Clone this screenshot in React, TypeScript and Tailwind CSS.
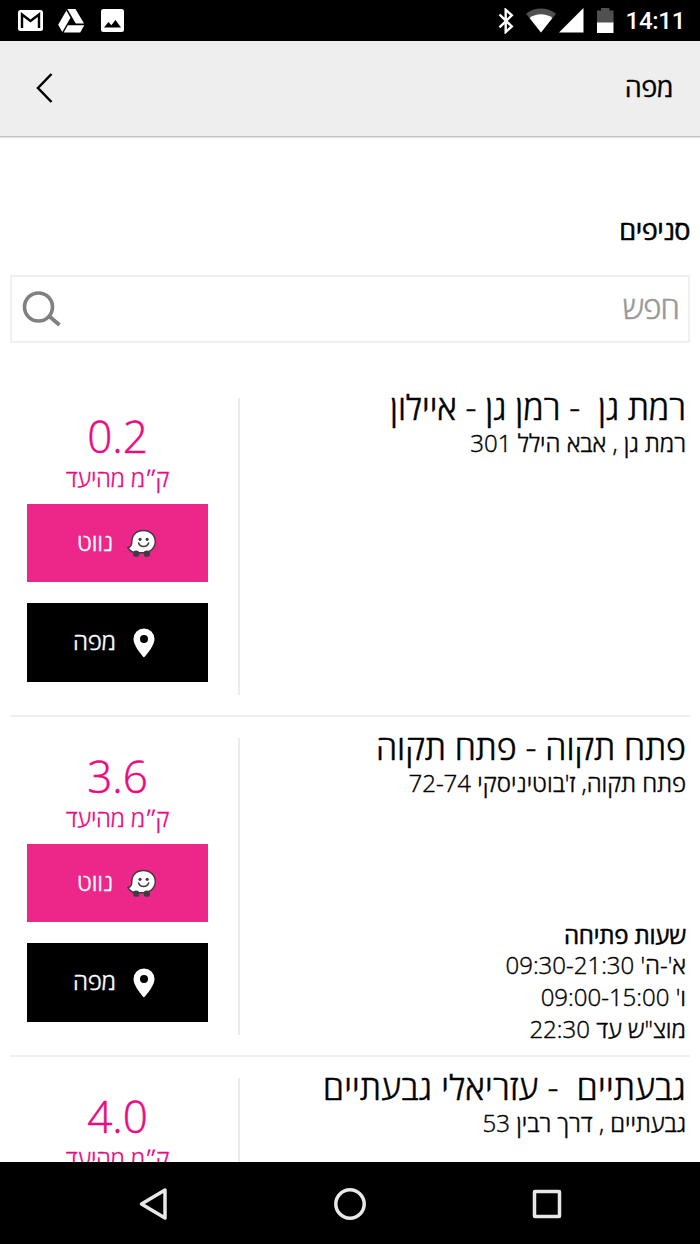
import type { ReactNode } from "react";

type Branch = {
  name: string;
  nameClass: string;
  address: string;
  distance: string;
  hours?: string[];
};

const branches: Branch[] = [
  {
    name: "רמת גן\u00a0 - רמן גן - איילון",
    nameClass: "tracking-normal",
    address: "רמת גן , אבא הילל 301",
    distance: "0.2",
  },
  {
    name: "פתח תקוה - פתח תקוה",
    nameClass: "tracking-normal",
    address: "פתח תקוה, ז'בוטיניסקי 72-74",
    distance: "3.6",
    hours: ["א'-ה' 09:30-21:30", "ו' 09:00-15:00", "מוצ\"ש עד 22:30"],
  },
  {
    name: "גבעתיים\u00a0 - עזריאלי גבעתיים",
    nameClass: "tracking-[0.27px]",
    address: "גבעתיים , דרך רבין 53",
    distance: "4.0",
  },
];

function StatusBar() {
  return (
    <div className="flex h-[41px] shrink-0 items-center justify-between bg-black pr-[15px] pl-[18px]">
      <div className="flex items-center">
        <svg width="25" height="21" viewBox="0 0 25 21">
          <rect width="25" height="21" rx="2.5" fill="#fff" />
          <path d="M4 18V4.5L12.5 11L21 4.5V18" fill="none" stroke="#000" strokeWidth="2.4" />
        </svg>
        <svg className="ml-[15px]" width="27" height="24" viewBox="0 0 27 24">
          <path d="M9.3 0H17.5L26 14.6H17.8Z" fill="#fff" />
          <path d="M8.4 1.6L12.5 8.7L4.3 23L0.2 15.8Z" fill="#fff" />
          <path d="M9.8 16.3H26.3L22.2 23.5H5.7Z" fill="#fff" />
        </svg>
        <svg className="ml-[16px]" width="23" height="23" viewBox="0 0 23 23">
          <rect width="23" height="23" rx="2.5" fill="#fff" />
          <path d="M3 18.5L7.5 13L10.3 16.2L14.5 11L20 18.5Z" fill="#000" />
        </svg>
      </div>
      <div className="flex items-center">
        <svg width="17" height="26" viewBox="0 0 17 26">
          <path d="M1.5 6.5L13.8 18.5L7.7 24V1.8L13.8 7.3L1.5 19.3" fill="none" stroke="#fff" strokeWidth="2.4" />
        </svg>
        <svg className="ml-[11px]" width="30" height="25" viewBox="0 0 30 25">
          <path d="M0 5.8C8.5-1.4 21.5-1.4 30 5.8L15 24.5Z" fill="#505050" />
          <path d="M3.6 10C10 5.1 20 5.1 26.4 10L15 24.5Z" fill="#fff" />
        </svg>
        <svg className="ml-[3px]" width="25" height="25" viewBox="0 0 25 25">
          <path d="M0 24.5L24.5 0V24.5Z" fill="#fff" />
        </svg>
        <svg className="ml-[13px]" width="17" height="25" viewBox="0 0 17 25">
          <path d="M0 2.5H4V0H12.5V2.5H16.5V15H0Z" fill="#505050" />
          <path d="M0 14.5H16.5V25H0Z" fill="#fff" />
        </svg>
        <span className="ml-[12px] pt-[2px] font-[Roboto] text-[24px] leading-[39px] font-medium tracking-[-0.3px] text-white">
          14:11
        </span>
      </div>
    </div>
  );
}

function Header() {
  return (
    <header className="flex h-[96px] shrink-0 items-center justify-between border-b border-[#c4c4c4] bg-[#eeeeee] pr-[27px] pb-[1px] pl-[36px] shadow-[0_1px_1px_#e0e0e0]">
      <svg width="18" height="32" viewBox="0 0 18 32">
        <path d="M15.5 2L2 16L15.5 30" fill="none" stroke="#000" strokeWidth="2.5" />
      </svg>
      <h1 dir="rtl" className="pb-[2px] text-[27px] leading-[40px] tracking-[-0.5px] [-webkit-text-stroke:0.3px]">
        מפה
      </h1>
    </header>
  );
}

function WazeIcon() {
  return (
    <svg width="30" height="29" viewBox="0 0 31 29">
      <path
        d="M5 12.5C5 5.5 10 1 17 1C24 1 29.2 6 29.2 12.5C29.2 19 24 24 17 24H10C6 24 2.5 21.5 1 18.7C4 18.5 5 16.5 5 12.5Z"
        fill="#fff"
        stroke="#403c40"
        strokeWidth="1.5"
      />
      <circle cx="9.5" cy="25" r="3.3" fill="#403c40" />
      <circle cx="20.5" cy="25" r="3.3" fill="#403c40" />
      <circle cx="13.5" cy="10.2" r="1.6" fill="#403c40" />
      <circle cx="20.8" cy="10.2" r="1.6" fill="#403c40" />
      <path d="M12 14C13.5 18.8 20.8 18.8 22.3 14" fill="none" stroke="#403c40" strokeWidth="1.6" strokeLinecap="round" />
    </svg>
  );
}

function PinIcon() {
  return (
    <svg width="22" height="30" viewBox="0 0 22 30">
      <path
        fillRule="evenodd"
        d="M11 .5A10.5 10.5 0 0 0 .5 11C.5 18.5 11 29.5 11 29.5S21.5 18.5 21.5 11A10.5 10.5 0 0 0 11 .5ZM11 7A4 4 0 1 1 11 15A4 4 0 1 1 11 7Z"
        fill="#fff"
      />
    </svg>
  );
}

function ActionButton({ label, icon, className }: { label: string; icon: ReactNode; className: string }) {
  return (
    <button className={`flex w-[181px] shrink-0 items-center text-white ${className}`}>
      <span dir="rtl" className="pb-[3px] text-[24px] leading-[32px] font-light tracking-[-0.2px] [-webkit-text-stroke:0.4px]">
        {label}
      </span>
      {icon}
    </button>
  );
}

function BranchRow({ branch }: { branch: Branch }) {
  return (
    <li className="mx-[10px] flex h-[340px] shrink-0 border-b-2 border-[#f0f0f0]">
      <div className="ml-[17px] flex w-[181px] shrink-0 flex-col items-center pt-[33px] text-[#ec0a82]">
        <span className="h-[51px] text-[44px] leading-[52px] font-light [-webkit-text-stroke:0.5px]">{branch.distance}</span>
        <span
          dir="rtl"
          className="h-[43px] pt-[1px] text-[24px] leading-[32px] font-light tracking-[-0.3px] whitespace-nowrap [-webkit-text-stroke:0.3px]"
        >
          ק<span className="text-[21px] tracking-[-2px] [-webkit-text-stroke:0px]">״</span>מ מהיעד
        </span>
        <ActionButton
          label="נווט"
          icon={<span className="ml-[14px]"><WazeIcon /></span>}
          className="h-[78px] bg-[#ed2789] pl-[50px]"
        />
        <ActionButton
          label="מפה"
          icon={<span className="ml-[17px]"><PinIcon /></span>}
          className="mt-[21px] h-[79px] bg-black pl-[46px]"
        />
      </div>
      <div className="mt-[21px] ml-[30px] h-[297px] w-[2px] shrink-0 bg-[#ececec]" />
      <div dir="rtl" className="flex flex-1 flex-col pt-[10px] pr-[4px] text-black">
        <h3
          className={`h-[40px] text-[34px] leading-[40px] font-light whitespace-nowrap [-webkit-text-stroke:0.5px] ${branch.nameClass}`}
        >
          {branch.name}
        </h3>
        <p className="h-[32px] text-[24px] leading-[32px] font-light whitespace-nowrap [-webkit-text-stroke:0.4px]">
          {branch.address}
        </p>
        {branch.hours && (
          <div className="mt-auto pb-[10px] text-[24px] leading-[32px] font-light [-webkit-text-stroke:0.4px]">
            <p className="leading-[29px] font-medium tracking-[-0.2px] [-webkit-text-stroke:0.5px]">שעות פתיחה</p>
            {branch.hours.map((line) => (
              <p key={line}>{line}</p>
            ))}
          </div>
        )}
      </div>
    </li>
  );
}

function NavigationBar() {
  return (
    <nav className="flex h-[82px] shrink-0 items-center justify-between bg-black px-[138px] pt-[1px]">
      <svg width="30" height="36" viewBox="0 0 30 36">
        <path d="M27 4L3.5 18L27 32Z" fill="none" stroke="#e8e8e8" strokeWidth="3.5" strokeLinejoin="round" />
      </svg>
      <svg width="34" height="34" viewBox="0 0 34 34">
        <circle cx="17" cy="17" r="14.2" fill="none" stroke="#e8e8e8" strokeWidth="3.5" />
      </svg>
      <svg width="30" height="30" viewBox="0 0 30 30">
        <rect x="2.5" y="2.5" width="25" height="25" rx=".5" fill="none" stroke="#e8e8e8" strokeWidth="3.5" />
      </svg>
    </nav>
  );
}

export default function App() {
  return (
    <div className="flex h-[1244px] w-[700px] flex-col overflow-hidden bg-white font-['Open_Sans','Noto_Sans',sans-serif] text-black">
      <StatusBar />
      <Header />
      <main className="flex min-h-0 flex-1 flex-col overflow-hidden">
        <h2 dir="rtl" className="mt-[73px] mr-[10px] text-[27px] leading-[40px] font-medium tracking-[-0.5px] [-webkit-text-stroke:0.5px]">
          סניפים
        </h2>
        <div className="mx-[10px] mt-[25px] flex h-[68px] shrink-0 items-center justify-between border-2 border-[#f0f0f0] pr-[9px] pl-[10px]">
          <svg width="40" height="38" viewBox="0 0 40 38">
            <circle cx="16.5" cy="17" r="14" fill="none" stroke="#808080" strokeWidth="3.6" />
            <path d="M27 26L37.5 35" stroke="#808080" strokeWidth="3.8" />
          </svg>
          <span dir="rtl" className="pb-[4px] text-[31px] leading-[44px] font-light tracking-[-0.8px] text-[#999999] [-webkit-text-stroke:0.5px]">
            חפש
          </span>
        </div>
        <ul className="mt-[34px] flex flex-col">
          {branches.map((branch) => (
            <BranchRow key={branch.name} branch={branch} />
          ))}
        </ul>
      </main>
      <NavigationBar />
    </div>
  );
}
